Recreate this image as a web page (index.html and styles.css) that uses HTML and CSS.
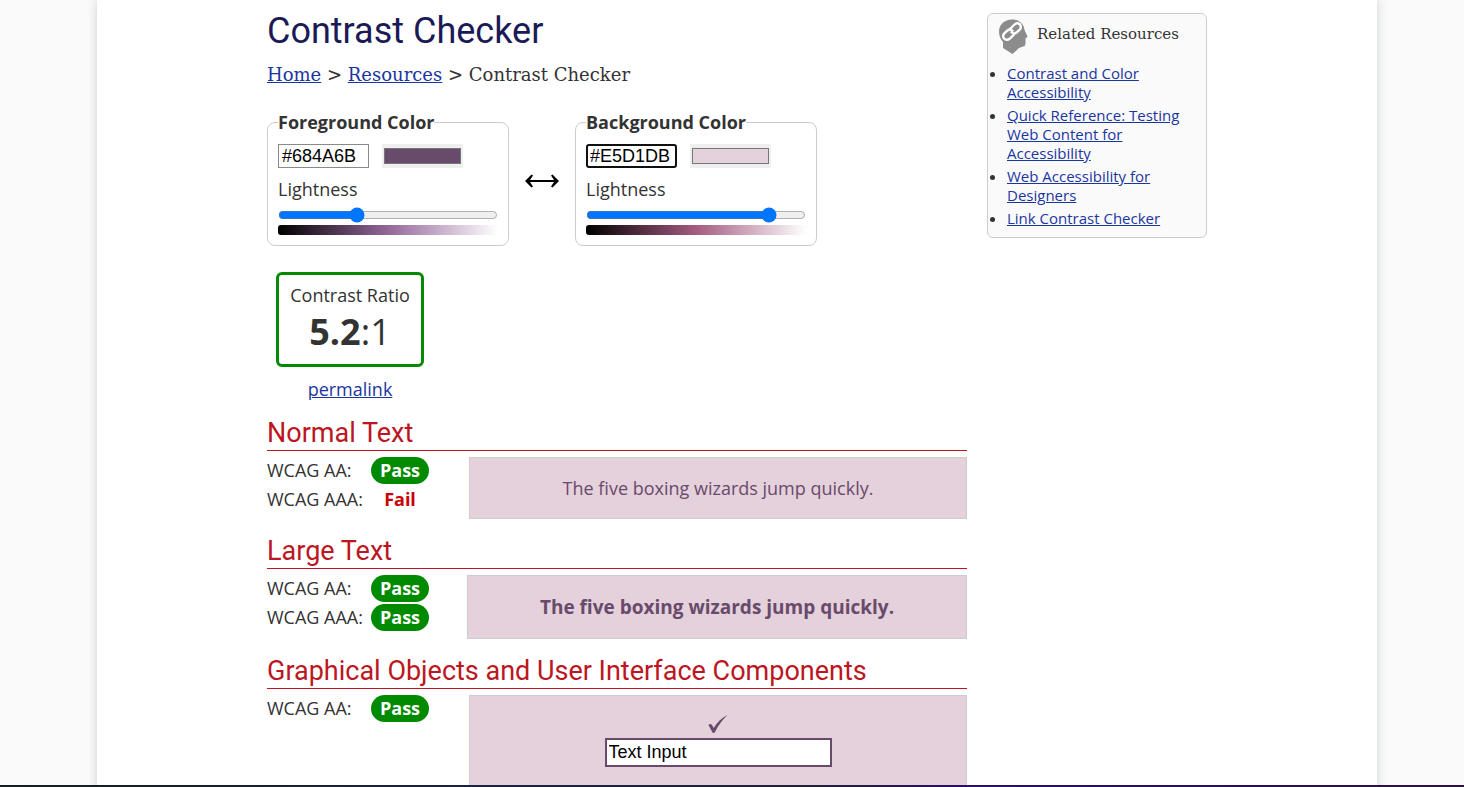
FILE: index.html
```html
<!DOCTYPE html>
<html lang="en">
<head>
<meta charset="utf-8">
<title>Contrast Checker</title>
<link rel="stylesheet" href="styles.css">
</head>
<body>
<div class="page">
  <div class="content">
    <main class="main">
      <h1 class="title">Contrast Checker</h1>
      <nav class="crumbs" aria-label="Breadcrumb"><a href="#home">Home</a> &gt; <a href="#resources">Resources</a> &gt; Contrast Checker</nav>

      <form class="pickers">
        <fieldset class="picker">
          <legend>Foreground Color</legend>
          <div class="picker-row">
            <input class="hex" type="text" value="#684A6B" aria-label="Foreground hex value">
            <input class="swatch" type="color" value="#684a6b" aria-label="Foreground color picker">
          </div>
          <label class="lightness" for="fg-light">Lightness</label>
          <input class="slider" id="fg-light" type="range" min="0" max="100" value="35">
          <div class="ramp ramp-fg"></div>
        </fieldset>
        <button class="swap" type="button" aria-label="Swap colors">
          <svg width="34" height="14" viewBox="0 0 34 14" aria-hidden="true"><path d="M0 7L6.500 .5L8 1.500L5 6H29L26 1.500L27.500 .5L34 7L27.500 13.500L26 12.500L29 8H5L8 12.500L6.500 13.500Z"/></svg>
        </button>
        <fieldset class="picker">
          <legend>Background Color</legend>
          <div class="picker-row">
            <input class="hex hex-active" type="text" value="#E5D1DB" aria-label="Background hex value">
            <input class="swatch" type="color" value="#e5d1db" aria-label="Background color picker">
          </div>
          <label class="lightness" for="bg-light">Lightness</label>
          <input class="slider" id="bg-light" type="range" min="0" max="100" value="86">
          <div class="ramp ramp-bg"></div>
        </fieldset>
      </form>

      <div class="result">
        <div class="ratio">
          <div>Contrast Ratio</div>
          <div class="ratio-value"><b>5.2</b>:1</div>
        </div>
        <a href="#permalink">permalink</a>
      </div>

      <section class="level">
        <h2>Normal Text</h2>
        <div class="level-body">
          <div class="grades">
            <div class="grade"><span class="grade-name">WCAG AA:</span><b class="pill">Pass</b></div>
            <div class="grade"><span class="grade-name">WCAG AAA:</span><b class="pill pill-fail">Fail</b></div>
          </div>
          <div class="sample">The five boxing wizards jump quickly.</div>
        </div>
      </section>

      <section class="level">
        <h2>Large Text</h2>
        <div class="level-body">
          <div class="grades">
            <div class="grade"><span class="grade-name">WCAG AA:</span><b class="pill">Pass</b></div>
            <div class="grade"><span class="grade-name">WCAG AAA:</span><b class="pill">Pass</b></div>
          </div>
          <div class="sample sample-large">The five boxing wizards jump quickly.</div>
        </div>
      </section>

      <section class="level">
        <h2>Graphical Objects and User Interface Components</h2>
        <div class="level-body">
          <div class="grades">
            <div class="grade"><span class="grade-name">WCAG AA:</span><b class="pill">Pass</b></div>
          </div>
          <div class="sample sample-ui">
            <svg width="20" height="18" viewBox="0 0 20 18" fill="#684a6b" aria-hidden="true"><path d="M0.500 10C1.500 8.800 3.200 8.800 4 10L5.800 13C9 7.500 13.500 3 19.500 0C13.800 5.500 10 10.500 7 17Q6.500 18 5.500 18Q4.600 18 4.200 17Z"/></svg>
            <input class="demo-input" type="text" value="Text Input" aria-label="Example text input">
          </div>
        </div>
      </section>
    </main>

    <aside class="related">
      <div class="related-head">
        <svg width="30" height="36" viewBox="0 0 30 36" aria-hidden="true"><path d="M14 .5C21 .5 26 5 26.500 11L29.500 17.500Q29.500 18.500 27.500 19V24.500Q27.500 27 25 27.500L21 29L14.500 35L5 29V23Q1 18.500 1 12.500C1 5.500 6.500 .5 14 .5Z" fill="#8c8c8c"/><g fill="none" stroke="#fff" stroke-width="2.400" stroke-linecap="round"><path d="M11.500 10.500L16 6Q19 3 21.800 5.300Q24 8 21.500 11L18.500 13.500Q16 15.500 13.500 13.200"/><path d="M16 15.500L12 19.500Q8.500 22 6 19.500Q4 17 6.500 14L9.500 11.500Q12 9.500 14.500 11.800"/></g></svg>
        <h2>Related Resources</h2>
      </div>
      <ul>
        <li><a href="#color">Contrast and Color Accessibility</a></li>
        <li><a href="#testing">Quick Reference: Testing Web Content for Accessibility</a></li>
        <li><a href="#designers">Web Accessibility for Designers</a></li>
        <li><a href="#links">Link Contrast Checker</a></li>
      </ul>
    </aside>
  </div>
</div>
<div class="edge"></div>
</body>
</html>
```
FILE: styles.css
```css
* { box-sizing: border-box; }
body {
  margin: 0;
  height: 100vh;
  overflow: hidden;
  padding-left: 10px;
  background: #fafafa;
  color: #333;
  font: 18px/25px "Open Sans", sans-serif;
}
a { color: #1a369f; }
.page {
  max-width: 1280px;
  min-height: 100vh;
  margin: 0 auto;
  background: #fff;
  box-shadow: 0 0 10px #cdd2d0;
}
.content {
  display: flex;
  align-items: flex-start;
  gap: 20px;
  max-width: 940px;
  margin: 0 auto;
}
.main { flex: 1; min-width: 0; }
.title {
  margin: 9px 0 0;
  color: #1a1a57;
  font: 36px/44px Roboto, sans-serif;
}
.crumbs {
  margin-top: 9px;
  font: 18px/25px "DejaVu Serif", serif;
}
.pickers {
  display: flex;
  align-items: center;
  margin-top: 23px;
}
.picker {
  width: 242px;
  margin: 0;
  padding: 9px 10px 10px;
  border: 1px solid #ccc;
  border-radius: 8px;
}
.picker legend { padding: 0; font-weight: 700; }
.picker-row { display: flex; gap: 13px; }
.hex {
  width: 91px;
  height: 24px;
  padding: 1px 3px;
  border: 1px solid #8a8a8a;
  font: 18px/20px "Liberation Sans", sans-serif;
  color: #000;
}
.hex-active {
  border: 2px solid #101010;
  border-radius: 3px;
  padding: 0 2px;
}
.swatch {
  width: 81px;
  height: 24px;
  padding: 0;
  border: 0;
  background: #efefef;
}
.lightness { display: block; margin-top: 9px; }
.slider {
  display: block;
  width: 100%;
  height: 16px;
  margin: 5px 0 2px;
}
.ramp { height: 10px; border-radius: 3px; }
.ramp-fg { background: linear-gradient(to right, #000, #946799, #fff); }
.ramp-bg { background: linear-gradient(to right, #000, #a45b80, #fff); }
.swap {
  display: flex;
  justify-content: center;
  width: 66px;
  padding: 5px 0 0;
  border: 0;
  background: none;
}
.result {
  display: flex;
  flex-direction: column;
  align-items: center;
  width: 148px;
  margin: 26px 0 0 9px;
}
.result a { line-height: 24px; }
.ratio {
  width: 100%;
  height: 95px;
  margin-bottom: 10px;
  padding-top: 8px;
  border: 3px solid #008a00;
  border-radius: 6px;
  text-align: center;
}
.ratio-value { font-size: 36px; line-height: 48px; }
.level { margin-top: 16px; }
.level h2 {
  margin: 0 0 6px;
  border-bottom: 1px solid #bc1622;
  color: #bc1622;
  font: 27px/33px Roboto, sans-serif;
}
.level-body {
  display: flex;
  justify-content: space-between;
  align-items: flex-start;
}
.grade { display: flex; margin-bottom: 2px; line-height: 27px; }
.grade-name { width: 104px; }
.pill {
  width: 58px;
  border-radius: 14px;
  background: #008a00;
  color: #fff;
  text-align: center;
}
.pill-fail { background: none; color: #c00; }
.sample {
  width: 498px;
  padding: 18px 10px 17px;
  border: 1px solid #ccc;
  background: #e5d1db;
  color: #684a6b;
  text-align: center;
}
.sample-large { width: 500px; padding: 19px 10px 18px; font-weight: 700; font-size: 19px; }
.sample-ui {
  display: flex;
  flex-direction: column;
  align-items: center;
  min-height: 120px;
  padding-top: 19px;
}
.demo-input {
  width: 227px;
  height: 29px;
  margin-top: 5px;
  padding: 1px 2px;
  border: 2px solid #684a6b;
  font: 18px/20px "Liberation Sans", sans-serif;
  color: #000;
}
.related {
  width: 220px;
  margin-top: 13px;
  padding: 5px 10px;
  border: 1px solid #ccc;
  border-radius: 6px;
  background: #fafafa;
  font-size: 15px;
  line-height: 19px;
}
.related-head { display: flex; gap: 9px; align-items: flex-start; }
.related h2 {
  margin: 6px 0 0;
  font: 15px/19px "DejaVu Serif", serif;
}
.related ul { margin: 9px 0 0; padding-left: 9px; }
.related li { margin-bottom: 4px; }
.edge {
  position: fixed;
  right: 0;
  bottom: 0;
  left: 0;
  height: 2px;
  background: linear-gradient(to right, #14201f, #1b2340 35%, #202235 55%, #2a1060 66%, #2a123f);
}
```
